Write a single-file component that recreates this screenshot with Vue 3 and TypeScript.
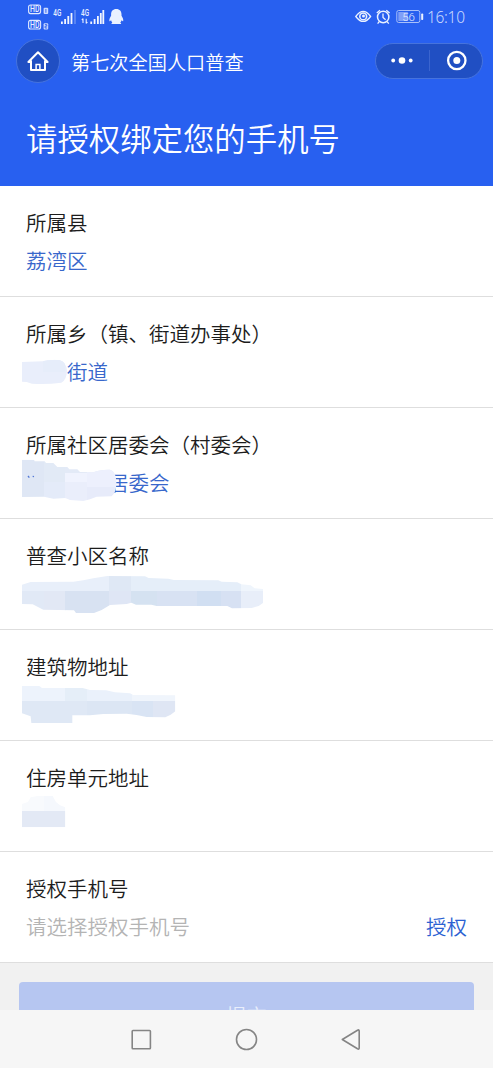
<script setup lang="ts">
interface Cell {
  x: number
  y: number
  w: number
  h: number
  fill: string
}
interface Mask {
  id: string
  offset: number
  outline: string
  cells: Cell[]
}
interface Field {
  label: string
  value?: string
  skip?: number
  mask?: Mask
}

const c = (x: number, y: number, w: number, h: number, fill: string): Cell => ({ x, y, w, h, fill })

const fields: Field[] = [
  { label: '所属县', value: '荔湾区' },
  {
    label: '所属乡（镇、街道办事处）',
    value: '街道',
    skip: 2,
    mask: {
      id: 'm-town',
      offset: -97,
      outline: 'M66 486 L128 484 Q146 478 178 480 Q198 484 201 512 Q200 540 184 548 Q140 554 96 551 L80 546 L66 545 Z',
      cells: [c(60, 470, 145, 90, '#e9eefb'), c(130, 470, 66, 45, '#e6edfa')],
    },
  },
  {
    label: '所属社区居委会（村委会）',
    value: '居委会',
    skip: 4,
    mask: {
      id: 'm-community',
      offset: 22,
      outline:
        'M66 89 L102 89 L104 94 L134 94 L138 99 L160 99 L172 111 L202 111 L208 118 L232 118 L240 126 L280 127 Q300 118 330 119 Q344 123 347 140 L350 160 Q347 190 335 199 L290 200 L270 208 L250 213 L210 210 L196 204 L160 206 L132 200 L66 201 Z',
      cells: [
        c(60, 80, 72, 130, '#dfe7f5'),
        c(131, 80, 66, 75, '#e2eaf6'),
        c(131, 155, 66, 60, '#e4ebf9'),
        c(196, 80, 160, 50, '#e3eaf7'),
        c(196, 130, 66, 25, '#f0f3fe'),
        c(196, 155, 66, 60, '#eaeefb'),
        c(262, 118, 95, 54, '#edf0fd'),
        c(262, 172, 95, 45, '#e7ebfa'),
      ],
    },
  },
  {
    label: '普查小区名称',
    mask: {
      id: 'm-block',
      offset: 21,
      outline:
        'M66 134 L92 126 L220 125 L250 121 L280 115 L322 108 L435 109 L446 114 L505 116 L522 120 L655 121 L665 125 L712 127 L724 133 L752 136 L764 145 L789 147 L789 189 L776 198 L755 204 L696 205 L682 198 L470 198 L454 194 L408 194 L394 188 L380 192 L330 195 L305 210 L282 219 L228 219 L222 211 L130 209 L98 193 L66 192 Z',
      cells: [
        c(60, 100, 268, 54, '#e8effa'),
        c(60, 154, 72, 70, '#e1e9f6'),
        c(131, 154, 66, 70, '#e2e8f5'),
        c(196, 154, 132, 70, '#d8e2f2'),
        c(328, 100, 66, 54, '#dfe8f5'),
        c(328, 154, 66, 60, '#dfe6f5'),
        c(394, 100, 330, 54, '#e5eef9'),
        c(394, 154, 76, 60, '#d5e2f1'),
        c(470, 154, 122, 60, '#d8e2f3'),
        c(592, 154, 70, 60, '#d1dff2'),
        c(662, 154, 62, 60, '#d7e1f3'),
        c(724, 120, 70, 34, '#eff5fc'),
        c(724, 154, 70, 60, '#e8eef9'),
      ],
    },
  },
  {
    label: '建筑物地址',
    mask: {
      id: 'm-building',
      offset: 20,
      outline:
        'M66 108 L118 108 L126 114 L248 114 L270 120 L318 121 L345 127 L390 130 L400 135 L526 136 L526 184 L512 194 L496 202 L440 201 L410 195 L380 191 L310 192 L270 196 L217 196 L217 219 L94 219 L92 199 L66 190 Z',
      cells: [
        c(60, 100, 136, 53, '#edf3fc'),
        c(196, 100, 66, 53, '#e5eef8'),
        c(262, 100, 134, 53, '#eaf1fb'),
        c(396, 130, 134, 23, '#f0f5fc'),
        c(60, 153, 202, 70, '#dfe8f5'),
        c(262, 153, 134, 50, '#dce6f4'),
        c(396, 153, 62, 52, '#d9e4f4'),
        c(458, 153, 72, 52, '#dfe6f4'),
      ],
    },
  },
  {
    label: '住房单元地址',
    mask: {
      id: 'm-unit',
      offset: -91,
      outline: 'M66 462 L84 456 L92 442 L112 438 L158 438 L168 456 L180 466 L196 472 L196 532 L66 532 Z',
      cells: [c(60, 430, 72, 53, '#f8fafd'), c(131, 430, 70, 53, '#f5f8fd'), c(60, 483, 140, 52, '#e3e9f5')],
    },
  },
]
</script>

<template>
  <div class="screen">
    <header class="hero">
      <div class="status">
        <svg class="status-left" width="110" height="34" viewBox="0 0 110 34">
          <g fill="none" stroke="#dfe8ff" stroke-width="1.1">
            <rect x="8.6" y="5" width="12" height="8.6" rx="2" />
            <rect x="8.6" y="20.4" width="12" height="8.6" rx="2" />
          </g>
          <g fill="#e8efff" class="tiny">
            <text x="10" y="12.3" font-size="8.2" textLength="9.4" lengthAdjust="spacingAndGlyphs">HD</text>
            <text x="10" y="27.7" font-size="8.2" textLength="9.4" lengthAdjust="spacingAndGlyphs">HD</text>
            <text x="33.3" y="15.8" font-size="8.6" textLength="8" lengthAdjust="spacingAndGlyphs">4G</text>
            <text x="61" y="15.8" font-size="8.6" textLength="8" lengthAdjust="spacingAndGlyphs">4G</text>
          </g>
          <rect x="23.6" y="7.8" width="4.6" height="6.2" rx="1" fill="#c9d8ff" />
          <rect x="23.6" y="23.2" width="4.6" height="6.2" rx="1" fill="#c9d8ff" />
          <path d="M25.900 9v3.800M24.900 24.600h1.900v1.600h-1.700v1.800h2" fill="none" stroke="#2a60ee" stroke-width=".9" />
          <g fill="#f2f6ff">
            <rect x="41" y="21.5" width="1.8" height="2.5" />
            <rect x="44.2" y="19" width="1.8" height="5" />
            <rect x="47.4" y="16" width="1.8" height="8" />
            <rect x="50.6" y="13" width="1.8" height="11" />
            <rect x="54.2" y="10" width="1.6" height="14" opacity=".3" />
            <rect x="70.3" y="21.5" width="1.8" height="2.5" />
            <rect x="73.7" y="19" width="1.8" height="5" />
            <rect x="77.000" y="16" width="1.8" height="8" />
            <rect x="79.900" y="13" width="1.8" height="11" />
            <rect x="82.400" y="10" width="1.8" height="14" />
          </g>
          <path d="M63 18.500v4.500M61.800 20l1.200-1.400M66.200 18.800v4.700M67.400 22l-1.200 1.500" fill="none" stroke="#e8efff" stroke-width="1.1" />
          <path
            d="M96.300 9c-3.500 0-5.200 2.300-5.200 5.200v1.500c-1.300 1.800-2 3.900-1.700 5.200.3.700 1.100-.1 1.700-.6.2.8.6 1.500 1.200 2.100-.6.400-.9.900-.9 1.600h9.800c0-.7-.3-1.200-.9-1.600.6-.6 1-1.300 1.200-2.100.6.500 1.400 1.300 1.700.6.300-1.300-.4-3.400-1.700-5.200v-1.500c0-2.900-1.700-5.200-5.200-5.200z"
            fill="#eaf1ff"
          />
        </svg>
        <svg class="status-right" width="72" height="34" viewBox="0 0 72 34">
          <g fill="none" stroke="#eaf1ff" stroke-width="1.3">
            <path d="M.8 16.5Q8.2 6.2 15.6 16.5Q8.2 26.4.8 16.5z" />
            <circle cx="8.2" cy="16.4" r="3.4" stroke-width="1.6" />
            <circle cx="28.2" cy="17" r="5.700" stroke-width="1.500" />
            <path d="M28 13.400v4l2.600 2.400M24.200 21.800l-1.600 1.800M32.200 21.800l1.600 1.800M21.800 13l3.200-2.800M31.300 10.200l3.300 2.800" />
          </g>
          <circle cx="8.500" cy="15.900" r="1.500" fill="#eaf1ff" />
          <rect x="41.800" y="10.500" width="23" height="12" rx="1.800" fill="none" stroke="#a9c0fa" />
          <rect x="43.300" y="12" width="9.500" height="9" fill="#7f9ff7" />
          <rect x="66.200" y="13.500" width="2" height="6.500" rx=".8" fill="#eaf1ff" />
          <text x="47.200" y="20.600" class="battery" textLength="12.800">56</text>
        </svg>
        <span class="clock">16:10</span>
      </div>
      <nav class="nav">
        <div class="home">
          <svg width="24" height="24" viewBox="0 0 24 24" fill="none" stroke="#fff" stroke-width="2">
            <path d="M4.900 13H2.400L12 3.200 21.600 13h-2.500M5 11.500V21h14v-9.500" stroke-linejoin="round" />
            <path d="M10.100 21v-5.500h3.800V21" stroke-width="1.500" />
          </svg>
        </div>
        <span class="nav-title">第七次全国人口普查</span>
        <div class="capsule">
          <svg width="106" height="34" viewBox="0 0 106 34">
            <g fill="#fff">
              <circle cx="17.200" cy="16.500" r="1.900" />
              <circle cx="26" cy="16.500" r="3.300" />
              <circle cx="34.700" cy="16.500" r="1.900" />
              <circle cx="80.800" cy="16.500" r="3.500" />
            </g>
            <path d="M53.500 6v21" stroke="#3b65cf" />
            <circle cx="80.800" cy="16.500" r="8.700" fill="none" stroke="#fff" stroke-width="2.300" />
          </svg>
        </div>
      </nav>
      <h1 class="title">请授权绑定您的手机号</h1>
    </header>

    <main class="form">
      <section v-for="field in fields" :key="field.label" class="row">
        <div class="label">{{ field.label }}</div>
        <div class="value" :class="field.skip ? 'skip-' + field.skip : ''">{{ field.value }}</div>
        <svg v-if="field.mask" class="mask" width="290" height="110" viewBox="0 0 290 110">
          <g :transform="`translate(0 ${field.mask.offset}) scale(.33333)`">
            <clipPath :id="field.mask.id"><path :d="field.mask.outline" /></clipPath>
            <g :clip-path="`url(#${field.mask.id})`" shape-rendering="crispEdges">
              <rect
                v-for="(cell, i) in field.mask.cells"
                :key="i"
                :x="cell.x"
                :y="cell.y"
                :width="cell.w"
                :height="cell.h"
                :fill="cell.fill"
              />
            </g>
            <path v-if="field.skip === 4" d="M84 138l4 5M98 139l4 1" stroke="#5479d6" stroke-width="4" />
          </g>
        </svg>
      </section>
      <section class="row">
        <div class="label">授权手机号</div>
        <div class="pick">
          <span class="placeholder">请选择授权手机号</span>
          <span class="authorize">授权</span>
        </div>
      </section>
    </main>

    <div class="submit-area">
      <button class="submit" disabled>提交</button>
    </div>

    <footer class="keys">
      <svg width="493" height="58" viewBox="0 0 493 58" fill="none" stroke="#858585" stroke-width="1.6" stroke-linejoin="round">
        <rect x="132.200" y="20.500" width="18.200" height="18.200" rx=".8" />
        <circle cx="246.500" cy="29.500" r="10" />
        <path d="M342.300 29.500 357.500 20.200q1.700-.9 1.700.8v17q0 1.700-1.700.8z" />
      </svg>
    </footer>
  </div>
</template>

<style>
body {
  margin: 0;
}
</style>

<style scoped>
.screen {
  width: 493px;
  height: 1068px;
  overflow: hidden;
  display: flex;
  flex-direction: column;
  background: #f1f1f1;
  font-family: 'Noto Sans CJK SC', 'Noto Sans', sans-serif;
  font-weight: 350;
}
.hero {
  flex: none;
  height: 186px;
  background: #2860f0;
  color: #fff;
}
.status {
  height: 34px;
  display: flex;
  padding: 0 28px 0 20px;
}
.status-right {
  margin-left: auto;
}
.status-left,
.status-right {
  display: block;
}
.tiny {
  font-family: Roboto, sans-serif;
  font-weight: 500;
}
.battery {
  font-family: Roboto, sans-serif;
  font-size: 11.5px;
  fill: #e4ecff;
}
.clock {
  width: 38px;
  font-family: 'Noto Sans', sans-serif;
  font-size: 15.5px;
  line-height: 35px;
  color: #cbdafe;
  white-space: nowrap;
  letter-spacing: -0.3px;
}
.nav {
  height: 56px;
  display: flex;
  align-items: center;
  padding: 0 10px 0 16px;
}
.home {
  width: 42px;
  height: 42px;
  margin-top: -2px;
  border: 1px solid #4673dd;
  border-radius: 50%;
  background: #204fc3;
  display: flex;
  align-items: center;
  justify-content: center;
}
.nav-title {
  margin-left: 11px;
  font-size: 19.2px;
  line-height: 28px;
}
.capsule {
  margin-left: auto;
  margin-top: -2px;
  width: 106px;
  height: 34px;
  border: 1px solid #4673dd;
  border-radius: 18px;
  background: #204fc3;
}
.capsule svg {
  display: block;
}
.title {
  margin: 24px 0 0 26px;
  font-size: 31.4px;
  line-height: 48px;
  font-weight: 350;
}
.form {
  flex: none;
}
.row {
  position: relative;
  box-sizing: border-box;
  height: 111px;
  padding: 17px 26px 0;
  border-bottom: 1px solid #dedede;
  background: #fff;
  font-size: 20.5px;
  line-height: 38px;
}
.label {
  color: #1c1c1c;
}
.value {
  height: 38px;
  color: #3867cb;
}
.skip-2 {
  padding-left: 41px;
}
.skip-4 {
  padding-left: 82px;
}
.mask {
  position: absolute;
  left: 0;
  top: 0;
}
.pick {
  display: flex;
  justify-content: space-between;
}
.placeholder {
  color: #b4b4b4;
}
.authorize {
  color: #2b61d2;
}
.submit-area {
  flex: 1;
  min-height: 0;
  overflow: hidden;
  padding: 19px 19px 0;
}
.submit {
  display: block;
  width: 100%;
  height: 66px;
  padding: 0;
  border: 0;
  border-radius: 4px;
  background: #b6c6f1;
  color: #e9eefb;
  font: inherit;
  font-size: 20.5px;
  line-height: 66px;
}
.keys {
  flex: none;
  height: 58px;
  background: #f6f6f6;
}
.keys svg {
  display: block;
}
</style>
